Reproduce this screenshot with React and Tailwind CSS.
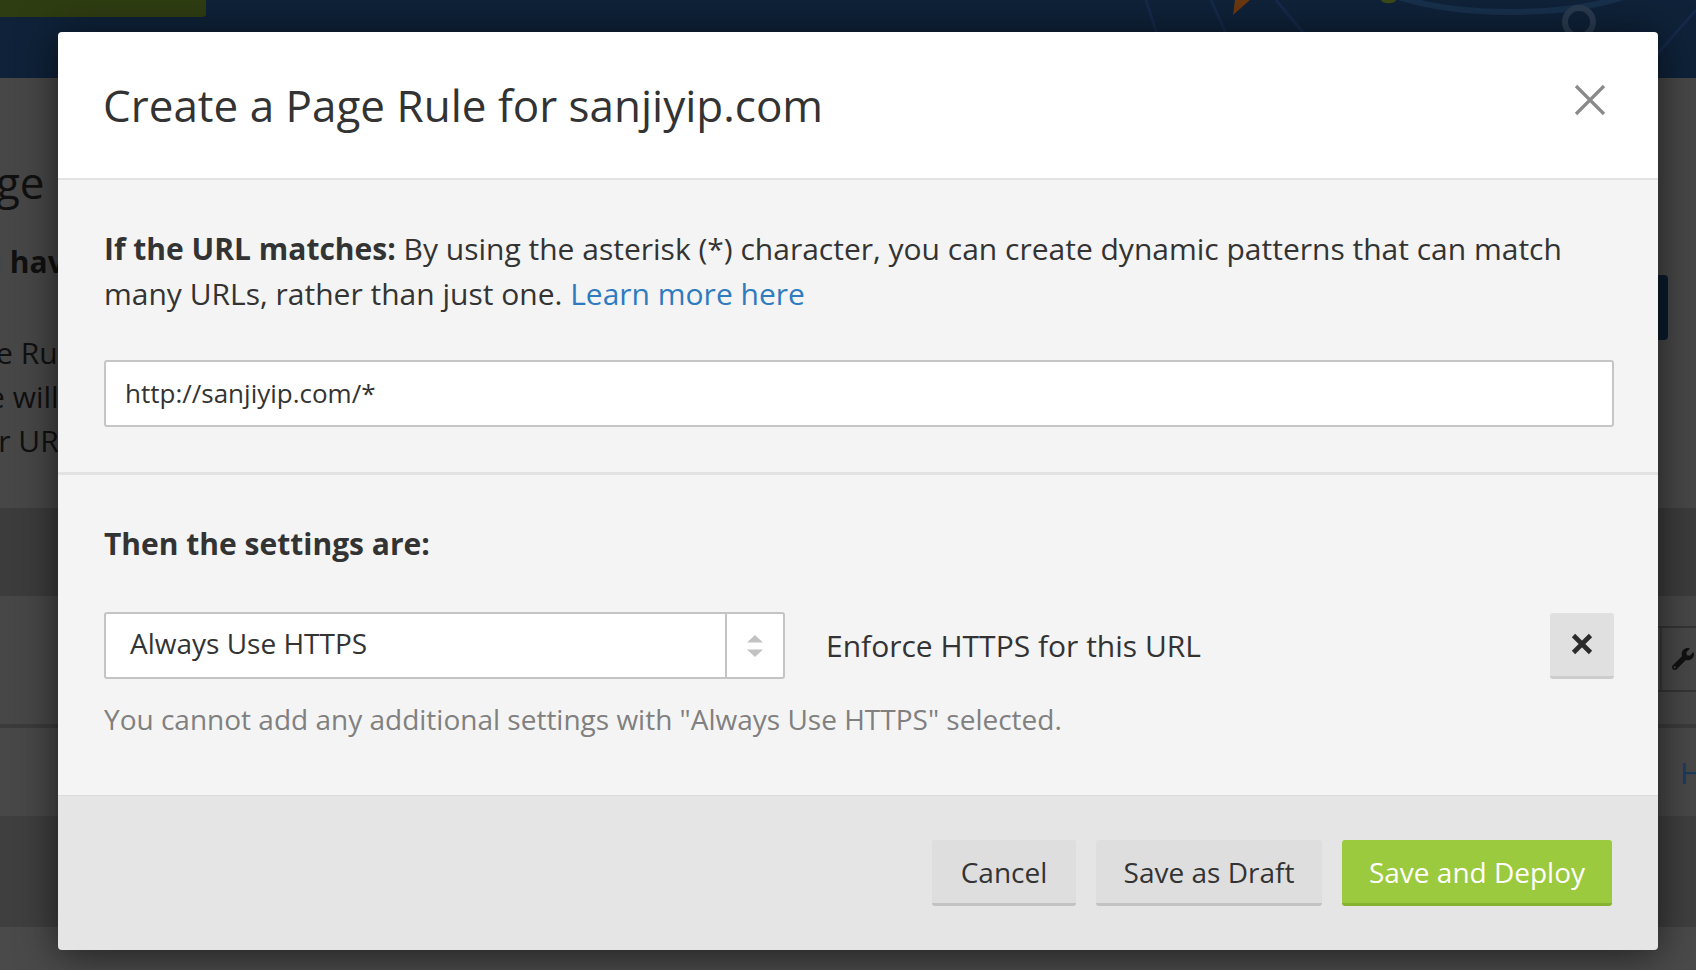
import React from "react";
import { FaWrench } from "react-icons/fa";

function CloseIcon() {
  return (
    <svg width="32" height="32" viewBox="0 0 32 32" fill="none">
      <path d="M2 2 L30 30 M30 2 L2 30" stroke="#8a8a8a" strokeWidth="3.2" strokeLinecap="butt" />
    </svg>
  );
}

function RemoveIcon() {
  return (
    <svg width="22" height="22" viewBox="0 0 22 22" fill="none">
      <path d="M2.5 2.5 L19.5 19.5 M19.5 2.5 L2.5 19.5" stroke="#2b2b2b" strokeWidth="4.6" />
    </svg>
  );
}

function SelectArrows() {
  return (
    <svg width="16" height="24" viewBox="0 0 16 24">
      <polygon points="8,1 16,8.5 0,8.5" fill="#c2c2c2" />
      <polygon points="0,15.5 16,15.5 8,23" fill="#c2c2c2" />
    </svg>
  );
}

function HeaderArt() {
  return (
    <svg width="620" height="78" viewBox="0 0 620 78" fill="none">
      <path d="M70 0 L95 78" stroke="#15294a" strokeWidth="3" />
      <path d="M135 0 L170 78" stroke="#15294a" strokeWidth="3" />
      <path d="M200 0 L265 78" stroke="#15294a" strokeWidth="3" />
      <path d="M275 -40 A160 52 0 0 0 595 -40" stroke="#18304c" strokeWidth="6" />
      <path d="M560 78 L620 10" stroke="#15294a" strokeWidth="3" />
      <circle cx="503" cy="22" r="14" stroke="#2a3b50" strokeWidth="6" />
      <path d="M503 36 L503 78" stroke="#1a2e46" strokeWidth="4" />
      <polygon points="159,0 174,0 157,15" fill="#6b3810" />
      <path d="M305 0 A7 3 0 0 0 320 0" fill="#3b4a18" />
    </svg>
  );
}

export default function App() {
  return (
    <div className="relative w-[1696px] h-[970px] overflow-hidden bg-[#474747] font-['Open_Sans',sans-serif]">
      {/* dimmed page behind the dialog */}
      <div className="flex flex-col h-full">
        <div className="h-[78px] shrink-0 bg-[#0f2239] flex justify-between items-start">
          <div className="w-[206px] h-[17px] bg-[#2f3d12] rounded-br-[3px]" />
          <HeaderArt />
        </div>
        <div className="ml-[-55px] w-[1723px] text-[#101010]">
          <div className="mt-[74px] text-[44px] leading-[60px] whitespace-nowrap">Page Rules</div>
          <div className="flex justify-between">
            <div>
              <div className="mt-[28px] text-[30px] leading-[44px] font-bold whitespace-nowrap">You have 3 Page Rules remaining.</div>
              <div className="mt-[47px] text-[30px] leading-[44px] whitespace-nowrap">
                <div>Page Rules let you control which settings trigger on a given URL.</div>
                <div className="ml-[-8px]">Page will be matched against your rule pattern.</div>
                <div>Your URLs are evaluated in order.</div>
              </div>
            </div>
            <div className="mt-[63px] w-[120px] h-[65px] bg-[#0c1b2d] rounded-[4px]" />
          </div>
        </div>
        <div className="mt-[45px] h-[88px] bg-[#3c3c3c] shrink-0" />
        <div className="h-[128px] bg-[#474747] shrink-0 flex flex-col items-end">
          <div className="h-[30px]" />
          <div className="w-[200px] h-[66px] flex justify-end border-y-2 border-[#353535]">
            <div className="w-[36px] flex items-center justify-end pr-[2px] text-[#111] border-l-2 border-[#393939]">
              <FaWrench size={22} />
            </div>
          </div>
        </div>
        <div className="h-[4px] bg-[#3b3b3b] shrink-0" />
        <div className="h-[88px] bg-[#484848] shrink-0 flex items-center justify-end">
          <span className="text-[30px] text-[#1d3a5c] mr-[-6px]">H</span>
        </div>
        <div className="h-[111px] bg-[#3f3f3f] shrink-0" />
        <div className="flex-1 bg-[#4a4a4a]" />
      </div>

      {/* dialog */}
      <div className="absolute left-[58px] top-[32px] w-[1600px] rounded-[4px] overflow-hidden shadow-[0_4px_40px_rgba(0,0,0,0.6)] text-[#333]">
        <div className="h-[148px] bg-white border-b-2 border-[#e2e2e2] flex items-center justify-between pl-[45px] pr-[52px]">
          <h2 className="text-[44px] leading-[60px] font-normal">Create a Page Rule for sanjiyip.com</h2>
          <button className="mb-[10px]"><CloseIcon /></button>
        </div>

        <div className="bg-[#f4f4f4] border-b-[3px] border-[#e2e2e2] pt-[46px] pb-[45px] pl-[46px] pr-[44px]">
          <p className="text-[30px] leading-[45px]">
            <strong className="font-bold">If the URL matches:</strong> By using the asterisk (*) character, you can create dynamic patterns that can match many URLs, rather than just one. <a className="text-[#2f7bbf]">Learn more here</a>
          </p>
          <div className="mt-[44px] h-[67px] bg-white border-2 border-[#c6c6c6] rounded-[3px] flex items-center px-[19px] text-[26px]">
            http://sanjiyip.com/*
          </div>
        </div>

        <div className="bg-[#f4f4f4] pt-[46px] pb-[55px] pl-[46px] pr-[44px]">
          <div className="text-[30px] leading-[45px] font-bold">Then the settings are:</div>
          <div className="mt-[46px] flex items-center">
            <div className="w-[681px] h-[67px] bg-white border-2 border-[#c4c4c4] rounded-[3px] flex">
              <div className="flex-1 flex items-center pl-[24px] pb-[6px] text-[28px]">Always Use HTTPS</div>
              <div className="w-[58px] border-l-2 border-[#c4c4c4] flex items-center justify-center">
                <SelectArrows />
              </div>
            </div>
            <div className="ml-[41px] text-[30px] leading-[45px]">Enforce HTTPS for this URL</div>
            <button className="ml-auto w-[64px] h-[66px] bg-[#e0e0e0] border-b-[3px] border-[#cdcdcd] rounded-[3px] flex items-center justify-center">
              <RemoveIcon />
            </button>
          </div>
          <div className="mt-[19px] text-[28px] leading-[42px] text-[#808080]">
            You cannot add any additional settings with "Always Use HTTPS" selected.
          </div>
        </div>

        <div className="h-[155px] bg-[#e5e5e5] border-t border-[#dcdcdc] flex items-start justify-end gap-[20px] pt-[44px] pr-[46px]">
          <button className="w-[144px] h-[66px] bg-[#dedede] border-b-[3px] border-[#c3c3c3] rounded-[3px] text-[28px] text-[#333] flex items-center justify-center">Cancel</button>
          <button className="w-[226px] h-[66px] bg-[#dedede] border-b-[3px] border-[#c3c3c3] rounded-[3px] text-[28px] text-[#333] flex items-center justify-center">Save as Draft</button>
          <button className="w-[270px] h-[66px] bg-[#9bca3e] border-b-[3px] border-[#86b22f] rounded-[3px] text-[28px] text-white flex items-center justify-center">Save and Deploy</button>
        </div>
      </div>
    </div>
  );
}
